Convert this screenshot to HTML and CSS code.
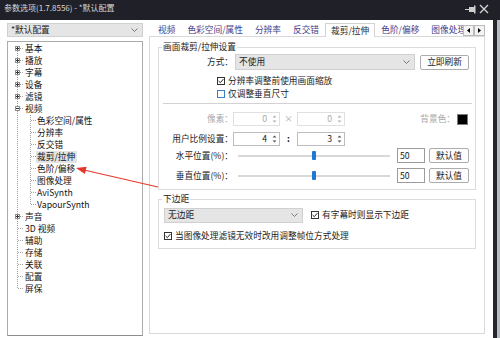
FILE: index.html
```html
<!DOCTYPE html>
<html lang="zh-CN">
<head>
<meta charset="utf-8">
<title>参数选项</title>
<link rel="stylesheet" href="styles.css">
</head>
<body>
<div class="titlebar">
  <span class="title">参数选项(1.7.8556) - *默认配置</span>
  <span class="tb-icons">
    <svg width="12" height="9" viewBox="0 0 12 9"><path d="M0 4.5H4" stroke="#cfcfcf"/><rect x="4" y="2" width="5" height="5" fill="#cfcfcf"/><path d="M9.75 0.5V8.5" stroke="#cfcfcf" stroke-width="1.5"/></svg>
    <svg width="10" height="10" viewBox="0 0 10 10"><path d="M1 1L9 9M9 1L1 9" stroke="#d4d4d4" stroke-width="1.3"/></svg>
  </span>
</div>
<div class="content">
  <div class="dialog">
    <div class="left">
      <div class="combo profile"><span class="val">*默认配置</span><svg width="7" height="4" viewBox="0 0 7 4"><path d="M0.5 0.5L3.5 3.5L6.5 0.5" fill="none" stroke="#7a7a7a"/></svg></div>
      <div class="tree">
        <div class="node"><svg width="16" height="12"><use href="#t-first"/></svg><span class="lbl">基本</span></div>
        <div class="node"><svg width="16" height="12"><use href="#t-plus"/></svg><span class="lbl">播放</span></div>
        <div class="node"><svg width="16" height="12"><use href="#t-plus"/></svg><span class="lbl">字幕</span></div>
        <div class="node"><svg width="16" height="12"><use href="#t-plus"/></svg><span class="lbl">设备</span></div>
        <div class="node"><svg width="16" height="12"><use href="#t-plus"/></svg><span class="lbl">滤镜</span></div>
        <div class="node"><svg width="16" height="12"><use href="#t-minus"/></svg><span class="lbl">视频</span></div>
        <div class="node"><svg width="28" height="12"><use href="#c-mid"/></svg><span class="lbl">色彩空间/属性</span></div>
        <div class="node"><svg width="28" height="12"><use href="#c-mid"/></svg><span class="lbl">分辨率</span></div>
        <div class="node"><svg width="28" height="12"><use href="#c-mid"/></svg><span class="lbl">反交错</span></div>
        <div class="node"><svg width="28" height="12"><use href="#c-mid"/></svg><span class="lbl sel">裁剪/拉伸</span></div>
        <div class="node"><svg width="28" height="12"><use href="#c-mid"/></svg><span class="lbl">色阶/偏移</span></div>
        <div class="node"><svg width="28" height="12"><use href="#c-mid"/></svg><span class="lbl">图像处理</span></div>
        <div class="node"><svg width="28" height="12"><use href="#c-mid"/></svg><span class="lbl">AviSynth</span></div>
        <div class="node"><svg width="28" height="12"><use href="#c-last"/></svg><span class="lbl">VapourSynth</span></div>
        <div class="node"><svg width="16" height="12"><use href="#t-plus"/></svg><span class="lbl">声音</span></div>
        <div class="node"><svg width="16" height="12"><use href="#t-mid"/></svg><span class="lbl">3D 视频</span></div>
        <div class="node"><svg width="16" height="12"><use href="#t-mid"/></svg><span class="lbl">辅助</span></div>
        <div class="node"><svg width="16" height="12"><use href="#t-mid"/></svg><span class="lbl">存储</span></div>
        <div class="node"><svg width="16" height="12"><use href="#t-mid"/></svg><span class="lbl">关联</span></div>
        <div class="node"><svg width="16" height="12"><use href="#t-mid"/></svg><span class="lbl">配置</span></div>
        <div class="node"><svg width="16" height="12"><use href="#t-last"/></svg><span class="lbl">屏保</span></div>
      </div>
    </div>
    <div class="right">
      <div class="tabbar">
        <div class="tabs">
          <span class="tab">视频</span>
          <span class="tab">色彩空间/属性</span>
          <span class="tab">分辨率</span>
          <span class="tab">反交错</span>
          <span class="tab sel">裁剪/拉伸</span>
          <span class="tab">色阶/偏移</span>
          <span class="tab">图像处理</span>
        </div>
        <div class="tabscroll">
          <span class="sbtn"><svg width="3" height="5" viewBox="0 0 3 5"><path d="M3 0V5L0 2.5Z" fill="#000"/></svg></span>
          <span class="sbtn"><svg width="3" height="5" viewBox="0 0 3 5"><path d="M0 0V5L3 2.5Z" fill="#000"/></svg></span>
        </div>
      </div>
      <div class="panel">
        <fieldset class="grp g1">
          <legend>画面裁剪/拉伸设置</legend>
          <div class="r-mode">
            <span class="lab">方式：</span>
            <div class="combo mode"><span class="val">不使用</span><svg width="7" height="4" viewBox="0 0 7 4"><path d="M0.5 0.5L3.5 3.5L6.5 0.5" fill="none" stroke="#7a7a7a"/></svg></div>
            <span class="btn refresh">立即刷新</span>
          </div>
          <div class="cbrow cb1"><span class="cb"><svg width="6" height="6" viewBox="0 0 6 6"><path d="M0.6 3L2.3 4.7L5.4 1.1" fill="none" stroke="#222" stroke-width="1"/></svg></span>分辨率调整前使用画面缩放</div>
          <div class="cbrow cb2"><span class="cb focus"></span>仅调整垂直尺寸</div>
          <div class="sep"></div>
          <div class="r-spin px">
            <span class="lab dis">像素：</span>
            <div class="spin dis"><span class="v">0</span><span class="arr"><svg width="7" height="12" viewBox="0 0 7 12"><path d="M1.5 4.5L3.5 2.5L5.5 4.5Z M1.5 7.5L3.5 9.5L5.5 7.5Z" fill="#b0b0b0"/></svg></span></div>
            <span class="mul dis">×</span>
            <div class="spin dis w2"><span class="v">0</span><span class="arr"><svg width="7" height="12" viewBox="0 0 7 12"><path d="M1.5 4.5L3.5 2.5L5.5 4.5Z M1.5 7.5L3.5 9.5L5.5 7.5Z" fill="#b0b0b0"/></svg></span></div>
            <span class="bgc">背景色：</span>
            <span class="swatch"></span>
          </div>
          <div class="r-spin ratio">
            <span class="lab">用户比例设置：</span>
            <div class="spin"><span class="v">4</span><span class="arr"><svg width="7" height="12" viewBox="0 0 7 12"><path d="M1.5 4.5L3.5 2.5L5.5 4.5Z M1.5 7.5L3.5 9.5L5.5 7.5Z" fill="#555"/></svg></span></div>
            <span class="mul colon">:</span>
            <div class="spin w2"><span class="v">3</span><span class="arr"><svg width="7" height="12" viewBox="0 0 7 12"><path d="M1.5 4.5L3.5 2.5L5.5 4.5Z M1.5 7.5L3.5 9.5L5.5 7.5Z" fill="#555"/></svg></span></div>
          </div>
          <div class="r-slide h">
            <span class="lab">水平位置(%)：</span>
            <div class="slider"><span class="track a"></span><span class="thumb"></span><span class="track b"></span></div>
            <span class="edit">50</span>
            <span class="btn def">默认值</span>
          </div>
          <div class="r-slide v">
            <span class="lab">垂直位置(%)：</span>
            <div class="slider"><span class="track a"></span><span class="thumb"></span><span class="track b"></span></div>
            <span class="edit">50</span>
            <span class="btn def">默认值</span>
          </div>
        </fieldset>
        <fieldset class="grp g2">
          <legend>下边距</legend>
          <div class="r-bm">
            <div class="combo bm"><span class="val">无边距</span><svg width="7" height="4" viewBox="0 0 7 4"><path d="M0.5 0.5L3.5 3.5L6.5 0.5" fill="none" stroke="#7a7a7a"/></svg></div>
            <div class="cbrow"><span class="cb"><svg width="6" height="6" viewBox="0 0 6 6"><path d="M0.6 3L2.3 4.7L5.4 1.1" fill="none" stroke="#222" stroke-width="1"/></svg></span>有字幕时则显示下边距</div>
          </div>
          <div class="cbrow last"><span class="cb"><svg width="6" height="6" viewBox="0 0 6 6"><path d="M0.6 3L2.3 4.7L5.4 1.1" fill="none" stroke="#222" stroke-width="1"/></svg></span>当图像处理滤镜无效时改用调整帧位方式处理</div>
        </fieldset>
      </div>
    </div>
  </div>
  <div class="edge"></div>
  <div class="outer"></div>
</div>
<svg class="arrow" width="500" height="338" viewBox="0 0 500 338">
  <line x1="84" y1="170" x2="158" y2="187" stroke="#e4382d" stroke-width="1.1"/>
  <polygon points="76,168 84.9,173.9 86.6,166.7" fill="#e4382d"/>
</svg>
<svg class="defs" width="0" height="0">
  <defs>
    <g id="bp"><rect x="7.5" y="3.5" width="4" height="4" fill="#fff" stroke="#8f8f8f"/><path d="M8 5.5H11M9.5 4V7" stroke="#333"/></g>
    <g id="bm"><rect x="7.5" y="3.5" width="4" height="4" fill="#fff" stroke="#8f8f8f"/><path d="M8 5.5H11" stroke="#333"/></g>
    <g id="t-first"><path d="M9.5 6V12M12 5.5H16" stroke="#a0a0a0" stroke-dasharray="1 1" fill="none"/><use href="#bp"/></g>
    <g id="t-plus"><path d="M9.5 0V12M12 5.5H16" stroke="#a0a0a0" stroke-dasharray="1 1" fill="none"/><use href="#bp"/></g>
    <g id="t-minus"><path d="M9.5 0V12M12 5.5H16" stroke="#a0a0a0" stroke-dasharray="1 1" fill="none"/><use href="#bm"/></g>
    <g id="t-mid"><path d="M9.5 0V12M10 5.5H16" stroke="#a0a0a0" stroke-dasharray="1 1" fill="none"/></g>
    <g id="t-last"><path d="M9.5 0V6M10 5.5H16" stroke="#a0a0a0" stroke-dasharray="1 1" fill="none"/></g>
    <g id="c-mid"><path d="M9.5 0V12M22.5 0V12M23 5.5H28" stroke="#a0a0a0" stroke-dasharray="1 1" fill="none"/></g>
    <g id="c-last"><path d="M9.5 0V12M22.5 0V6M23 5.5H28" stroke="#a0a0a0" stroke-dasharray="1 1" fill="none"/></g>
  </defs>
</svg>
</body>
</html>
```

FILE: styles.css
```css
* { box-sizing: border-box; }
html, body { margin: 0; padding: 0; }
body {
  width: 500px;
  height: 338px;
  overflow: hidden;
  position: relative;
  background: #fff;
  color: #1a1a1a;
  font-family: "Noto Sans CJK SC", "Noto Sans", sans-serif;
  font-size: 8.7px;
  line-height: 12px;
}

/* title bar */
.titlebar {
  height: 20px;
  background: #1f2028;
  color: #d8d8d8;
  display: flex;
  align-items: flex-start;
  padding: 2px 0 0 4px;
  font-size: 8px;
  line-height: 12px;
}
.title { flex: 1; white-space: nowrap; }
.tb-icons { display: flex; align-items: center; gap: 2px; margin-right: 11px; margin-top: 2px; }
.tb-icons svg { display: block; }

/* body */
.content { display: flex; height: 318px; }
.dialog {
  width: 493px;
  background: #fff;
  display: flex;
  padding: 3px 0 0 7px;
}
.edge { width: 4px; background: #24252d; }
.outer { width: 3px; background: #b8bbc1; }

/* left column */
.left { width: 136px; display: flex; flex-direction: column; }
.combo {
  display: flex;
  align-items: center;
  background: #e5e5e5;
  border: 1px solid #d0d0d0;
  padding: 0 4px 0 3px;
  white-space: nowrap;
}
.combo .val { flex: 1; }
.combo svg { display: block; flex: none; }
.profile { height: 14px; }
.tree {
  margin-top: 4px;
  height: 295px;
  border: 1px solid #ababab;
  border-bottom-color: #8c8c8c;
  padding-top: 1px;
  background: #fff;
}
.node { display: flex; height: 12px; align-items: center; white-space: nowrap; color: #111; }
.node svg { display: block; flex: none; }
.node .lbl { padding: 0 2px 0 1px; line-height: 12px; }
.node .lbl.sel { background: #e3e3e3; }
.defs { display: block; width: 0; height: 0; overflow: hidden; }

/* right column */
.right { width: 336px; margin-left: 6px; display: flex; flex-direction: column; }
.tabbar { height: 14px; display: flex; border-bottom: 1px solid #d9d9d9; }
.tabs {
  flex: 1;
  height: 14px;
  display: flex;
  align-items: flex-start;
  overflow: hidden;
  padding-left: 3px;
}
.tab {
  flex: none;
  padding: 0 6px;
  height: 13px;
  line-height: 14px;
  white-space: nowrap;
  color: #3f3f8c;
}
.tab.sel {
  height: 14px;
  background: #fff;
  border: 1px solid #d3d3d3;
  border-bottom: none;
  padding: 0 5px;
  line-height: 13px;
  color: #2a2a2a;
}
.tabscroll { display: flex; margin-top: 2px; height: 11px; flex: none; }
.sbtn {
  width: 11px;
  height: 11px;
  border: 1px solid #bcbcbc;
  background: #f3f3f3;
  display: flex;
  align-items: center;
  justify-content: center;
}
.sbtn svg { display: block; }

.panel {
  height: 297px;
  border: 1px solid #d9d9d9;
  border-top: none;
  display: flex;
  flex-direction: column;
}
.grp {
  margin: 4px 8px 0 8px;
  padding: 0 0 6px 0;
  border: 1px solid #dcdcdc;
  min-width: 0;
}
.grp legend {
  margin-left: 3px;
  padding: 0 1px;
  height: 12px;
  line-height: 12px;
  color: #1a1a1a;
}
.g2 { margin-top: 3px; }

.lab { width: 74px; flex: none; text-align: right; white-space: nowrap; }
.dis { color: #a8a8a8; }

.r-mode { height: 18px; display: flex; align-items: center; }
.combo.mode { margin-left: 2px; width: 180px; height: 16px; }
.btn {
  height: 15px;
  border: 1px solid #adadad;
  border-radius: 2px;
  background: #fdfdfd;
  display: flex;
  align-items: center;
  justify-content: center;
  white-space: nowrap;
  color: #1a1a1a;
}
.btn.refresh { margin-left: 5px; width: 49px; }

.cbrow { display: flex; align-items: center; height: 12px; white-space: nowrap; }
.cb {
  width: 8px;
  height: 8px;
  border: 1px solid #333;
  background: #fff;
  margin-right: 3px;
  flex: none;
  display: flex;
  align-items: center;
  justify-content: center;
}
.cb svg { display: block; }
.cb.focus { border-color: #3b7fc4; }
.g1 .cbrow { margin-left: 58px; }
.cb1 { margin-top: 4px; }
.cb2 { margin-top: 1px; }
.sep { height: 1px; background: #d2d2d2; margin: 3px 3px 0 4px; }

.r-spin { height: 14px; display: flex; align-items: center; }
.r-spin.px { margin-top: 8px; }
.r-spin.ratio { margin-top: 6px; }
.spin {
  width: 47px;
  height: 14px;
  border: 1px solid #bdbdbd;
  background: #fff;
  display: flex;
  align-items: center;
}
.spin.w2 { width: 48px; }
.spin.dis { border-color: #e0e0e0; }
.spin .v { flex: 1; text-align: right; padding-right: 4px; }
.spin .arr { width: 7px; margin-right: 1px; display: flex; }
.spin .arr svg { display: block; }
.mul { width: 17px; text-align: center; }
.colon { font-weight: bold; color: #000; }
.bgc { margin-left: auto; color: #a8a8a8; white-space: nowrap; }
.swatch {
  width: 11px;
  height: 11px;
  border: 1px solid #7d7d7d;
  background: #000;
  margin: 0 7px 0 2px;
}

.r-slide { height: 15px; display: flex; align-items: center; }
.r-slide.h { margin-top: 2px; }
.r-slide.v { margin-top: 5px; }
.slider { margin-left: 5px; width: 152px; height: 15px; display: flex; align-items: center; }
.track { height: 2px; background: #d9d9d9; }
.track.a { width: 74px; }
.track.b { flex: 1; }
.thumb { width: 4px; height: 9px; background: #1f78d4; border-radius: 1px; }
.edit {
  margin-left: 7px;
  width: 28px;
  height: 15px;
  border: 1px solid #9c9c9c;
  padding-left: 2px;
  line-height: 13px;
  background: #fff;
}
.btn.def { margin-left: 4px; width: 40px; }

.r-bm { height: 18px; margin-top: 1px; display: flex; align-items: center; padding-left: 5px; }
.combo.bm { width: 139px; height: 15px; margin-right: 8px; }
.g2 .cbrow.last { margin-top: 6px; margin-left: 5px; }

.arrow { position: absolute; left: 0; top: 0; pointer-events: none; }
```
